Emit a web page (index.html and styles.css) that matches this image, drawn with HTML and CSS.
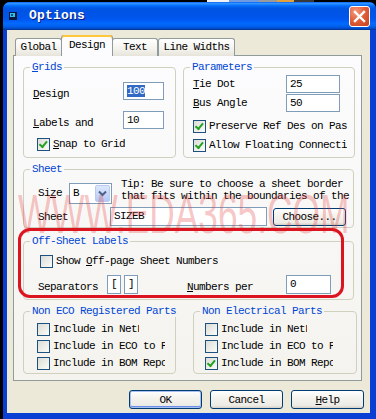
FILE: index.html
```html
<!DOCTYPE html>
<html lang="en">
<head>
	<meta charset="UTF-8">
	<title>Options</title>
	<link rel="stylesheet" href="styles.css">
</head>
<body>
	<div class="desk">
		<span class="d1"></span><span class="d2"></span><span class="d3"></span><span class="d4"></span><span class="d5"></span>
	</div>
	<div class="window">
		<div class="titlebar">
			<svg class="appicon" width="8" height="8" viewBox="0 0 8 8"><rect x="0" y="0" width="8" height="8" fill="#0b1a3a"/><rect x="1" y="1" width="5" height="4" fill="#2fc0e8"/><rect x="2" y="2" width="2" height="2" fill="#0b4f86"/></svg>
			<span class="title">Options</span>
			<span class="close"><svg width="21" height="21" viewBox="0 0 21 21"><path d="M6 6 L15 15 M15 6 L6 15" stroke="#fff" stroke-width="2.4" stroke-linecap="square"/></svg></span>
		</div>
		<div class="client">
			<div class="tabs">
				<span class="tab t-global">Global</span>
				<span class="tab t-design active">Design</span>
				<span class="tab t-text">Text</span>
				<span class="tab t-lw">Line Widths</span>
			</div>
			<div class="panel">
				<div class="row1">
					<fieldset class="grp grids">
						<legend><u>G</u>rids</legend>
						<div class="gb">
							<div class="frm">
								<span class="lbl"><u>D</u>esign</span>
								<span class="edit e-grid"><span class="sel">100</span></span>
								<span class="lbl"><u>L</u>abels and</span>
								<span class="edit e-grid">10</span>
							</div>
							<div class="chk snap"><span class="box on"></span><span class="ctext"><u>S</u>nap to Grid</span></div>
						</div>
					</fieldset>
					<fieldset class="grp params">
						<legend>Parameters</legend>
						<div class="gb">
							<div class="frm frm-p">
								<span class="lbl"><u>T</u>ie Dot</span>
								<span class="edit e-par">25</span>
								<span class="lbl"><u>B</u>us Angle</span>
								<span class="edit e-par">50</span>
							</div>
							<div class="chklist">
								<div class="chk"><span class="box on"></span><span class="ctext clip-p">Preserve Ref Des on Paste</span></div>
								<div class="chk"><span class="box on"></span><span class="ctext clip-p">Allow Floating Connections</span></div>
							</div>
						</div>
					</fieldset>
				</div>

				<fieldset class="grp sheet">
					<legend>Sheet</legend>
					<div class="gb">
						<div class="srow">
							<span class="lbl l-size">Si<u>z</u>e</span>
							<span class="combo"><span class="cval">B</span><span class="cbtn"><svg width="9" height="7" viewBox="0 0 9 7"><path d="M1 1.5 L4.5 5 L8 1.5" fill="none" stroke="#4d6185" stroke-width="2"/></svg></span></span>
							<span class="tip">Tip: Be sure to choose a sheet border<br>that fits within the boundaries of the</span>
						</div>
						<div class="srow srow2">
							<span class="lbl l-sheet">Sheet</span>
							<span class="edit e-sheet">SIZEB</span>
							<span class="btn b-choose">Choose...</span>
						</div>
					</div>
				</fieldset>

				<fieldset class="grp offsheet">
					<legend>Off-Sheet Labels</legend>
					<div class="gb">
						<div class="chk show"><span class="box"></span><span class="ctext">Show <u>O</u>ff-page Sheet Numbers</span></div>
						<div class="orow">
							<span class="lbl l-sep">Separators</span>
							<span class="edit e-br">[</span>
							<span class="edit e-br">]</span>
							<span class="lbl l-num"><u>N</u>umbers per</span>
							<span class="edit e-num">0</span>
						</div>
					</div>
				</fieldset>

				<div class="row4">
					<fieldset class="grp noneco">
						<legend>Non ECO Registered Parts</legend>
						<div class="gb chklist tight">
							<div class="chk"><span class="box"></span><span class="ctext c-net">Include in NetList</span></div>
							<div class="chk"><span class="box"></span><span class="ctext c-long">Include in ECO to PCB</span></div>
							<div class="chk"><span class="box"></span><span class="ctext c-long">Include in BOM Report</span></div>
						</div>
					</fieldset>
					<fieldset class="grp nonel">
						<legend>Non Electrical Parts</legend>
						<div class="gb chklist tight">
							<div class="chk"><span class="box"></span><span class="ctext c-net">Include in NetList</span></div>
							<div class="chk"><span class="box"></span><span class="ctext c-long">Include in ECO to PCB</span></div>
							<div class="chk"><span class="box on"></span><span class="ctext c-long">Include in BOM Report</span></div>
						</div>
					</fieldset>
				</div>
			</div>
			<div class="buttons">
				<span class="btn b-main default">OK</span>
				<span class="btn b-main">Cancel</span>
				<span class="btn b-main"><u>H</u>elp</span>
			</div>
		</div>
	</div>
	<!-- overlays: watermark and the red marker ring -->
	<div class="watermark">WWW.EDA365.COM</div>
	<div class="marker"></div>
</body>
</html>
```

FILE: styles.css
```css
body{margin:0;width:376px;height:419px;overflow:hidden;position:relative;background:#000;font:11px/12px "Liberation Mono","Noto Sans CJK SC",monospace;letter-spacing:-0.6px;color:#000;}
u{text-decoration:underline;text-underline-offset:1px;}

.desk{display:flex;height:2px;padding-left:207px;}
.desk span{display:block;height:2px;}
.desk .d1{width:22px;background:#f2f2f4;}
.desk .d2{width:30px;background:#6f9ae0;}
.desk .d3{width:18px;background:#9a9a9a;}
.desk .d4{width:17px;background:#e2a13a;}
.desk .d5{width:20px;background:#3a3a3a;}

.window{margin-left:3px;width:373px;height:417px;background:#0a3fd4;border-radius:7px 7px 0 0;overflow:hidden;}
.titlebar{display:flex;align-items:center;height:28px;padding:0 6px 0 6px;background:linear-gradient(#0058ee 0%,#3593ff 4%,#288eff 7%,#127dff 10%,#036ffc 13%,#0262ee 17%,#0057e5 22%,#0054e3 28%,#0055eb 56%,#005bf5 66%,#026afe 76%,#0062ef 86%,#0052d6 93%,#0040ab 97%,#003092 100%);}
.appicon{display:block;margin-top:-1px;}
.title{margin-left:12px;color:#fff;font-weight:bold;font-size:13px;letter-spacing:0.2px;text-shadow:1px 1px 0 #0a1c7a;}
.close{margin-left:auto;width:21px;height:21px;box-sizing:border-box;border:1px solid #fff;border-radius:3px;background:radial-gradient(circle at 30% 25%,#f39a7c 0%,#e2603c 45%,#c8411d 100%);}
.close svg{display:block;margin:-1px;}

.client{margin:0 6px 0 4px;height:383px;background:#ece9d8;}

.tabs{display:flex;align-items:flex-end;height:21px;padding:5px 0 0 8px;position:relative;z-index:1;margin-bottom:-1px;}
.tab{box-sizing:border-box;flex:none;height:18px;border:1px solid #919b9c;border-bottom:none;border-radius:3px 3px 0 0;background:linear-gradient(#fff,#f3f2ec 60%,#e6e4da);text-align:center;line-height:17px;}
.tab.active{height:21px;background:#fcfcfe;border-top:none;box-shadow:inset 0 2px 0 #ffc83c,inset 0 1px 0 #e68b2c;padding-top:3px;line-height:15px;}
.t-global{width:47px;}
.t-design{width:52px;margin-left:-1px;}
.t-text{width:46px;margin-left:-1px;}
.t-lw{width:77px;}

.panel{box-sizing:border-box;margin-left:6px;width:349px;height:326px;border:1px solid #919b9c;background:linear-gradient(#fcfcfe,#f4f3ee);padding:5px 0 0 9px;}

.grp{box-sizing:border-box;flex:none;margin:0;padding:0;min-width:0;border:1px solid #d0d0bf;border-radius:4px;}
.grp legend{padding:0 2px;margin-left:6px;line-height:12px;color:#0046d5;white-space:nowrap;}

.row1{display:flex;gap:7px;}
.grids{width:153px;height:97px;}
.grids .gb{padding:9px 0 0 9px;}
.params{width:172px;height:97px;}
.params .gb{padding:2px 0 0 9px;}

.frm{display:grid;grid-template-columns:90px 41px;row-gap:11px;}
.frm-p{grid-template-columns:93px 54px;row-gap:1px;}
.lbl{white-space:nowrap;flex:none;}
.frm .lbl{padding-top:6px;}
.frm-p .lbl{padding-top:3px;}

.edit{box-sizing:border-box;display:block;flex:none;height:18px;border:1px solid #7f9db9;background:#fff;padding:0 0 0 3px;line-height:16px;white-space:nowrap;overflow:hidden;}
.sel{background:#316ac5;color:#fff;}

.chk{display:flex;align-items:center;height:13px;}
.box{box-sizing:border-box;width:13px;height:13px;flex:none;border:1px solid #1c5180;background:linear-gradient(135deg,#dcdcd7,#fbfbf8);position:relative;}
.box.on::after{content:"";position:absolute;left:2px;top:1px;width:3px;height:6px;border:solid #21a121;border-width:0 2px 2px 0;transform:rotate(40deg);transform-origin:70% 60%;}
.ctext{flex:none;margin-left:3px;white-space:nowrap;overflow:hidden;line-height:13px;}
.snap{margin:9px 0 0 4px;}
.chklist{display:flex;flex-direction:column;gap:6px;margin-top:8px;}
.clip-p{width:138px;}

.sheet{margin-top:5px;width:331px;height:65px;}
.sheet .gb{padding:3px 0 0 14px;}
.srow{display:flex;align-items:flex-start;}
.l-size{width:31px;margin-top:9px;}
.combo{box-sizing:border-box;flex:none;display:flex;width:43px;height:21px;margin-top:5px;border:1px solid #7f9db9;background:#fff;}
.cval{flex:1;padding-left:3px;line-height:19px;}
.cbtn{box-sizing:border-box;width:15px;height:17px;margin:1px;border:1px solid #bacbf3;border-radius:2px;background:linear-gradient(#dde7fc,#b5c9f7);display:flex;align-items:center;justify-content:center;}
.tip{flex:none;margin-left:9px;white-space:nowrap;overflow:hidden;width:229px;}
.srow2{align-items:center;margin-top:3px;}
.l-sheet{width:72px;}
.e-sheet{width:157px;height:19px;line-height:17px;}

.btn{box-sizing:border-box;flex:none;display:flex;align-items:center;justify-content:center;border:1px solid #003c74;border-radius:3px;background:linear-gradient(#fff,#f4f3ee 40%,#ecebe6 85%,#d6d0c5);}
.b-choose{width:73px;height:18px;margin-left:6px;}

.offsheet{margin-top:7px;width:331px;height:65px;}
.offsheet .gb{padding:8px 0 0 14px;}
.show{margin-left:2px;}
.orow{display:flex;align-items:flex-end;margin-top:7px;}
.orow .lbl{margin-bottom:1px;line-height:12px;}
.l-sep{width:69px;}
.e-br{width:14px;height:19px;padding:0;text-align:center;line-height:17px;}
.e-br+.e-br{margin-left:3px;}
.l-num{width:99px;margin-left:49px;}
.e-num{width:45px;height:19px;line-height:17px;}

.row4{display:flex;gap:17px;margin-top:5px;}
.noneco{width:153px;height:69px;}
.noneco .gb{padding-left:13px;}
.nonel{width:164px;height:69px;}
.nonel .gb{padding-left:11px;}
.tight{gap:4px;margin-top:6px;}
.c-net{width:86px;}
.c-long{width:112px;}

.buttons{display:flex;justify-content:flex-end;gap:8px;padding:9px 6px 0 0;}
.b-main{width:73px;height:19px;}
.b-main.default{box-shadow:inset 0 0 0 1px #a5c0f0,inset 0 -1px 0 1px #6b8ee8;}

.watermark{position:absolute;left:18px;top:186px;font:56px/56px "Liberation Sans",sans-serif;letter-spacing:0;color:rgba(228,60,60,0.3);transform:scaleX(0.63);transform-origin:0 0;white-space:nowrap;pointer-events:none;}
.marker{position:absolute;left:18px;top:228px;width:320px;height:64px;border:3px solid #dc1420;border-radius:12px;pointer-events:none;}
```
